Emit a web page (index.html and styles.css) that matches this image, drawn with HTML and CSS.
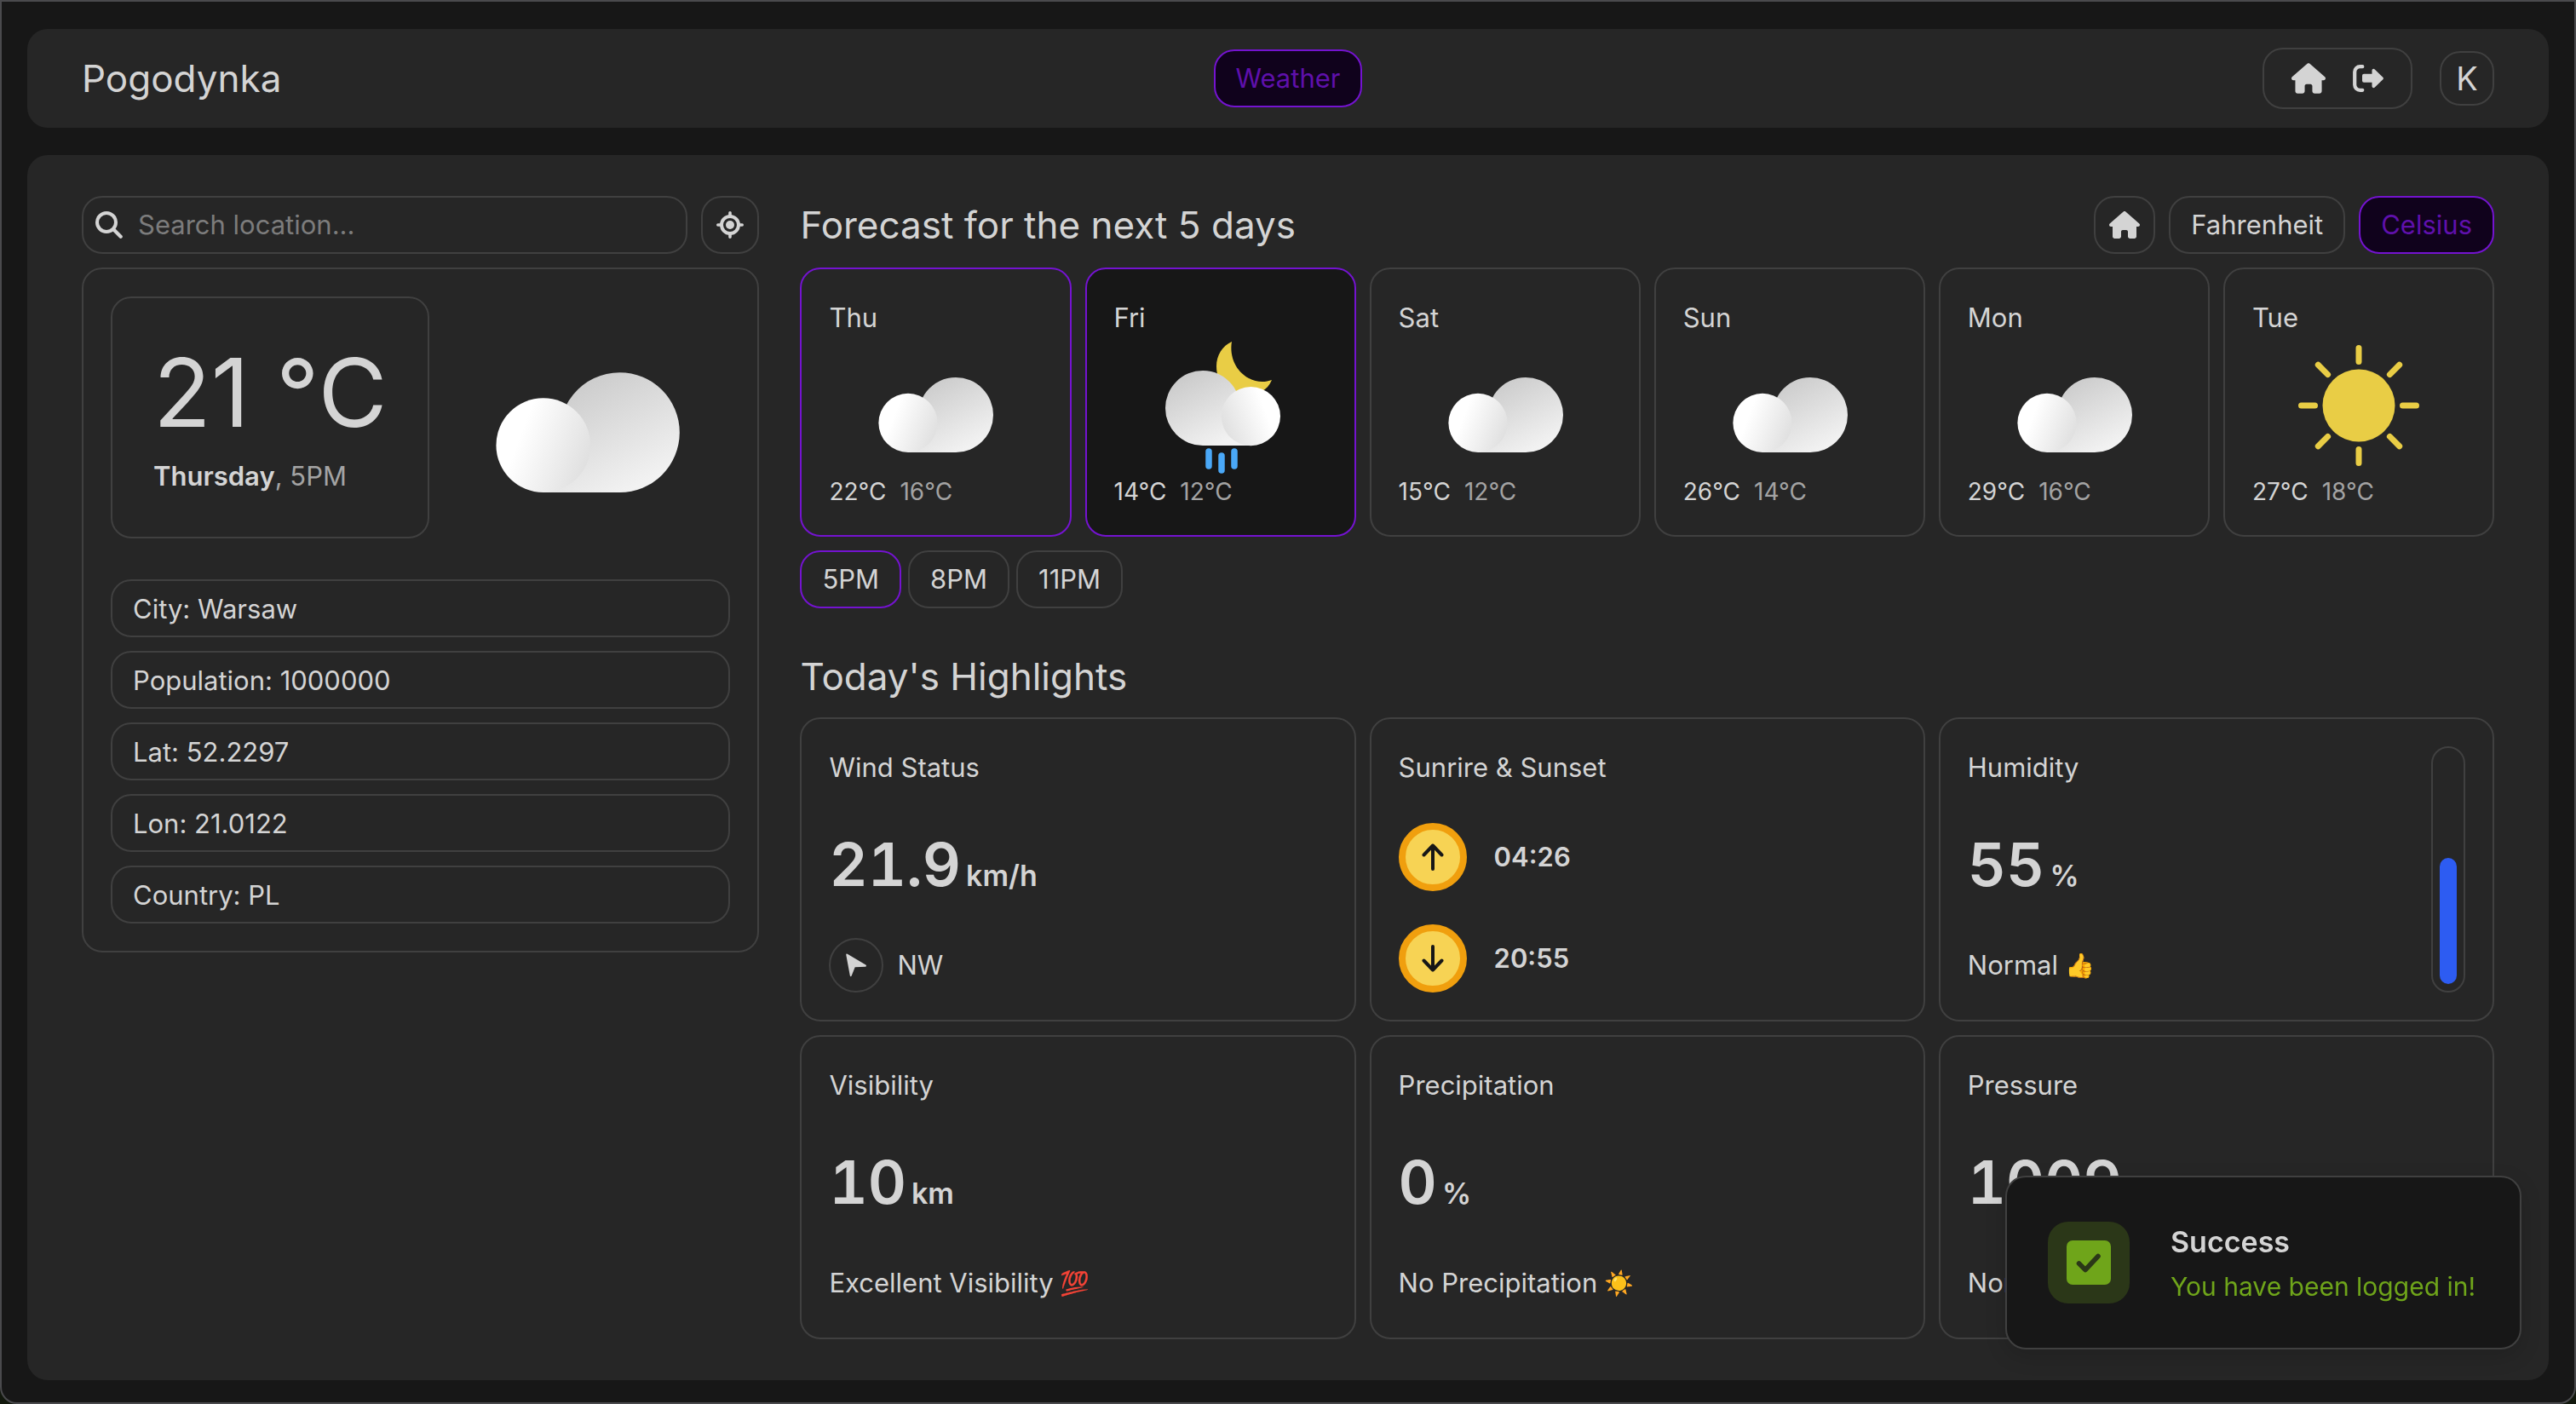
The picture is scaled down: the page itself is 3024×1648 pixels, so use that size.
FILE: index.html
```html
<!DOCTYPE html>
<html lang="en">
<head>
<meta charset="utf-8">
<meta name="viewport" content="width=device-width, initial-scale=1">
<title>Pogodynka</title>
<link rel="stylesheet" href="styles.css">
</head>
<body>
<svg class="defs" aria-hidden="true">
  <defs>
    <linearGradient id="cloud-back" x1="0" y1="0" x2="0.6" y2="1">
      <stop offset="0" stop-color="#c4c4c4"/><stop offset="1" stop-color="#f2f2f2"/>
    </linearGradient>
    <linearGradient id="cloud-front" x1="0.2" y1="0.3" x2="1" y2="0.6">
      <stop offset="0.1" stop-color="#ffffff"/><stop offset="1" stop-color="#e0e0e0"/>
    </linearGradient>
    <linearGradient id="cloud-front-flip" x1="0.8" y1="0.3" x2="0" y2="0.6">
      <stop offset="0.1" stop-color="#ffffff"/><stop offset="1" stop-color="#e0e0e0"/>
    </linearGradient>
  </defs>
  <symbol id="cloud" viewBox="0 0 160 160">
    <path fill="url(#cloud-back)" d="M104 47a44 44 0 0 1 0 88H48V100H61A44 44 0 0 1 104 47Z"/>
    <circle cx="48" cy="100.400" r="34.600" fill="url(#cloud-front)"/>
  </symbol>
  <symbol id="night-rain" viewBox="0 0 160 160">
    <path fill="#e9cd45" d="M93 5C82 10 75 21 75 34C75 56 92 68 108 68C124 68 135 62 140 50C132 53 122 53 113 48C98 40 90 23 93 5Z"/>
    <path fill="url(#cloud-back)" d="M59 39a44 44 0 0 0 0 88H115V92H102A44 44 0 0 0 59 39Z"/>
    <circle cx="115.400" cy="92.600" r="34.600" fill="url(#cloud-front-flip)"/>
    <path stroke="#4aa8f7" stroke-width="7.500" stroke-linecap="round" d="M66 134v17M81 139v17M96 134v17"/>
  </symbol>
  <symbol id="sun" viewBox="0 0 160 160">
    <circle cx="80" cy="80" r="42.500" fill="#e9cd45"/>
    <path stroke="#e9cd45" stroke-width="7" stroke-linecap="round" d="M80 28.500v-16M80 131.500v16M28.500 80h-16M131.500 80h16M43.600 43.600l-11.300-11.300M116.400 43.600l11.300-11.300M43.600 116.400l-11.300 11.300M116.400 116.400l11.300 11.300"/>
  </symbol>
  <symbol id="house" viewBox="0 0 576 512">
    <path fill="currentColor" d="M575.8 255.5c0 18-15 32.1-32 32.1h-32l.7 160.2c0 2.700-.2 5.400-.5 8.100V472c0 22.100-17.900 40-40 40H392c-22.100 0-40-17.900-40-40V384c0-17.700-14.300-32-32-32H256c-17.700 0-32 14.300-32 32v88c0 22.100-17.900 40-40 40H104c-22.100 0-40-17.900-40-40V287.600H32c-18 0-32-14-32-32.100c0-9 3-17 10-24L266.400 8c7-7 15-8 22-8s15 2 21 7L564.800 231.500c8 7 12 15 11 24z"/>
  </symbol>
</svg>

<div class="page">
  <header class="topbar">
    <h1 class="brand">Pogodynka</h1>
    <nav><a class="pill pill-on" href="#weather">Weather</a></nav>
    <div class="account">
      <div class="quick">
        <a href="#home" aria-label="Home"><svg class="icon-house-lg"><use href="#house"/></svg></a>
        <a href="#logout" aria-label="Log out"><svg class="icon-out" viewBox="0 0 36 32" fill="none"><path d="M11.300 2.200H8.500A6.300 6.300 0 0 0 2.200 8.500V23.500A6.300 6.300 0 0 0 8.500 29.800H11.300" stroke="currentColor" stroke-width="4.200" stroke-linecap="round"/><path d="M13 10.700h9.500V7c0-2.200 2-2.800 3.300-1.500l9.300 9a2 2 0 0 1 0 3l-9.300 9c-1.300 1.300-3.300.7-3.300-1.500v-4.200H13a2 2 0 0 1-2-2v-6.100a2 2 0 0 1 2-2Z" fill="currentColor"/></svg></a>
      </div>
      <button class="avatar" type="button">K</button>
    </div>
  </header>

  <main class="board">
    <section class="side">
      <form class="search-row">
        <label class="search">
          <svg class="icon-search" viewBox="0 0 32 32" fill="none" stroke="currentColor" stroke-linecap="round"><circle cx="13" cy="13" r="11" stroke-width="4"/><path d="M21.500 21.500L29.700 29.700" stroke-width="4.200"/></svg>
          <input type="text" placeholder="Search location..." aria-label="Search location">
        </label>
        <button class="locate" type="button" aria-label="Use my location"><svg class="icon-locate" viewBox="0 0 32 32" fill="none" stroke="currentColor"><circle cx="16" cy="16" r="10" stroke-width="4"/><circle cx="16" cy="16" r="5" fill="currentColor" stroke="none"/><path d="M16 1.800v4M16 26.200v4M1.800 16h4M26.200 16h4" stroke-width="3.600" stroke-linecap="round"/></svg></button>
      </form>
      <div class="card now">
        <div class="now-top">
          <div class="card now-temp">
            <p class="now-value">21 °C</p>
            <p class="now-when"><b>Thursday</b>, 5PM</p>
          </div>
          <div class="now-icon"><svg role="img" aria-label="Cloudy"><use href="#cloud"/></svg></div>
        </div>
        <ul class="facts">
          <li>City: Warsaw</li>
          <li>Population: 1000000</li>
          <li>Lat: 52.2297</li>
          <li>Lon: 21.0122</li>
          <li>Country: PL</li>
        </ul>
      </div>
    </section>

    <section class="content">
      <div class="forecast-head">
        <h2>Forecast for the next 5 days</h2>
        <div class="units">
          <button class="pill pill-icon" type="button" aria-label="Home location"><svg class="icon-house"><use href="#house"/></svg></button>
          <button class="pill" type="button">Fahrenheit</button>
          <button class="pill pill-on" type="button">Celsius</button>
        </div>
      </div>
      <div class="days">
        <button class="card day day-active" type="button"><span>Thu</span><svg><use href="#cloud"/></svg><span class="range">22°C <i>16°C</i></span></button>
        <button class="card day day-active day-hover" type="button"><span>Fri</span><svg><use href="#night-rain"/></svg><span class="range">14°C <i>12°C</i></span></button>
        <button class="card day" type="button"><span>Sat</span><svg><use href="#cloud"/></svg><span class="range">15°C <i>12°C</i></span></button>
        <button class="card day" type="button"><span>Sun</span><svg><use href="#cloud"/></svg><span class="range">26°C <i>14°C</i></span></button>
        <button class="card day" type="button"><span>Mon</span><svg><use href="#cloud"/></svg><span class="range">29°C <i>16°C</i></span></button>
        <button class="card day" type="button"><span>Tue</span><svg><use href="#sun"/></svg><span class="range">27°C <i>18°C</i></span></button>
      </div>
      <div class="hours">
        <button class="pill pill-active" type="button">5PM</button>
        <button class="pill" type="button">8PM</button>
        <button class="pill" type="button">11PM</button>
      </div>
      <h2 class="highlights-title">Today's Highlights</h2>
      <div class="highlights">
        <article class="card stat">
          <h3>Wind Status</h3>
          <p class="value">21.9 <small>km/h</small></p>
          <p class="note"><span class="compass"><svg viewBox="0 0 24 28" fill="currentColor"><path d="M1.800.800Q0 0 .300 1.900L4.800 26.200q.9 2 1.900 0L10.700 16.200l12.400-.4q1.600-1 .2-2.200Z"/></svg></span>NW</p>
        </article>
        <article class="card stat">
          <h3>Sunrire &amp; Sunset</h3>
          <p class="sun-time"><span class="coin"><svg viewBox="0 0 32 32"><path d="M16 30V2.500M5.500 13.500L16 2.500L26.500 13.500"/></svg></span>04:26</p>
          <p class="sun-time"><span class="coin"><svg viewBox="0 0 32 32"><path d="M16 2V29.500M5.500 18.500L16 29.500L26.500 18.500"/></svg></span>20:55</p>
        </article>
        <article class="card stat stat-split">
          <div class="stat-body">
            <h3>Humidity</h3>
            <p class="value">55 <small>%</small></p>
            <p class="note">Normal <span class="emoji">👍</span></p>
          </div>
          <div class="meter"><div class="meter-fill" style="height:55%"></div></div>
        </article>
        <article class="card stat">
          <h3>Visibility</h3>
          <p class="value">10 <small>km</small></p>
          <p class="note">Excellent Visibility <span class="emoji">💯</span></p>
        </article>
        <article class="card stat">
          <h3>Precipitation</h3>
          <p class="value">0 <small>%</small></p>
          <p class="note">No Precipitation <span class="emoji">☀️</span></p>
        </article>
        <article class="card stat">
          <h3>Pressure</h3>
          <p class="value">1009 <small>hPa</small></p>
          <p class="note">Normal <span class="emoji">👍</span></p>
        </article>
      </div>
    </section>
  </main>
</div>

<div class="toast" role="status">
  <span class="toast-icon"><svg viewBox="0 0 52 52"><rect width="52" height="52" rx="7" fill="#6fa51a"/><path d="M14.500 27l7.500 7.500L37 18.500" fill="none" stroke="#2b3718" stroke-width="5.600" stroke-linecap="round" stroke-linejoin="round"/></svg></span>
  <div>
    <p class="toast-title">Success</p>
    <p class="toast-text">You have been logged in!</p>
  </div>
</div>
</body>
</html>
```
FILE: styles.css
```css
:root {
  --ink: #d4d4d4;
  --muted: #a3a3a3;
  --line: #404040;
  --panel: #262626;
  --deep: #171717;
  --accent: #7413d0;
}

* { box-sizing: border-box; margin: 0; padding: 0; }

body {
  background: #12180d;
  color: var(--ink);
  font-family: Inter, "Liberation Sans", "Noto Color Emoji", sans-serif;
  font-size: 31px;
  line-height: 50px;
}

button, input { font: inherit; color: inherit; background: none; }
a { color: inherit; text-decoration: none; }
ul { list-style: none; }
h1, h2 { font-size: 44px; font-weight: 400; line-height: 64px; }
h3 { font-size: inherit; font-weight: 400; }
svg { display: block; }
.defs { position: absolute; width: 0; height: 0; }

.page {
  min-height: 100vh;
  display: flex;
  flex-direction: column;
  gap: 32px;
  padding: 32px 30px 26px;
  border: 2px solid #4a4a4d;
  border-radius: 0 0 20px 20px;
  background: var(--deep);
}

.topbar {
  display: grid;
  grid-template-columns: 1fr auto 1fr;
  align-items: center;
  padding: 22px 64px;
  border-radius: 24px;
  background: var(--panel);
}
.account { display: flex; align-items: center; justify-content: flex-end; gap: 32px; }
.quick {
  display: flex;
  align-items: center;
  gap: 32px;
  height: 72px;
  padding: 0 32px;
  border: 2px solid var(--line);
  border-radius: 24px;
}
.icon-house-lg { width: 40px; height: 36px; }
.icon-out { width: 36px; height: 32px; }
.avatar {
  width: 64px;
  height: 64px;
  border: 2px solid var(--line);
  border-radius: 24px;
  font-size: 38px;
}

.pill {
  display: inline-flex;
  align-items: center;
  justify-content: center;
  height: 68px;
  padding: 0 24px;
  border: 2px solid var(--line);
  border-radius: 24px;
}
.pill-icon { padding: 0 16px; }
.pill-active { border-color: var(--accent); }
.pill-on { border-color: var(--accent); background: #10021c; color: #5f10ab; }

.board {
  flex: 1;
  display: grid;
  grid-template-columns: 2fr 5fr;
  gap: 48px;
  padding: 48px 64px;
  border-radius: 24px;
  background: var(--panel);
}
.card { border: 2px solid var(--line); border-radius: 24px; }

.side { display: flex; flex-direction: column; gap: 16px; align-self: start; }
.search-row { display: flex; gap: 16px; }
.search {
  flex: 1;
  display: flex;
  align-items: center;
  gap: 18px;
  height: 68px;
  padding: 0 14px;
  border: 2px solid var(--line);
  border-radius: 24px;
}
.icon-search { width: 32px; height: 32px; }
.search input { flex: 1; min-width: 0; border: 0; outline: 0; }
.search input::placeholder { color: #7c7c7c; opacity: 1; }
.locate {
  display: grid;
  place-items: center;
  width: 68px;
  height: 68px;
  border: 2px solid var(--line);
  border-radius: 24px;
}
.icon-locate { width: 32px; height: 32px; }

.now { display: flex; flex-direction: column; gap: 48px; padding: 32px; }
.now-top { display: flex; gap: 16px; }
.now-temp { display: flex; flex-direction: column; gap: 12px; padding: 50px 48px 46px; white-space: nowrap; }
.now-value { font-size: 111px; line-height: 122px; }
.now-when { color: var(--muted); }
.now-when b { color: var(--ink); font-weight: 600; }
.now-icon { flex: 1; display: grid; place-items: center; }
.now-icon svg { width: 256px; height: 256px; }

.facts { display: grid; gap: 16px; }
.facts li { padding: 8px 24px 6px; border: 2px solid var(--line); border-radius: 24px; }

.content { display: flex; flex-direction: column; min-width: 0; }
.forecast-head { display: flex; align-items: center; justify-content: space-between; height: 68px; }
.units { display: flex; gap: 16px; }
.icon-house { width: 36px; height: 32px; }

.days { display: grid; grid-template-columns: repeat(6, 1fr); gap: 16px; margin-top: 16px; }
.day { display: flex; flex-direction: column; padding: 32px 32px 30px; text-align: left; }
.day svg { width: 160px; height: 160px; margin-top: -2px; align-self: center; }
.day-active { border-color: var(--accent); }
.day-hover { background: var(--deep); }
.range { display: flex; gap: 16px; font-size: 28px; line-height: 42px; }
.range i { font-style: normal; color: var(--muted); }

.hours { display: flex; gap: 8px; margin-top: 16px; }

.highlights-title { margin: 48px 0 16px; }
.highlights {
  flex: 1;
  display: grid;
  grid-template-columns: repeat(3, 1fr);
  grid-auto-rows: 1fr;
  gap: 16px;
}
.stat { display: flex; flex-direction: column; justify-content: space-between; padding: 32px; }
.stat-split { flex-direction: row; }
.stat-body { display: flex; flex-direction: column; justify-content: space-between; }
.value {
  display: flex;
  align-items: baseline;
  gap: 6px;
  margin-top: 16px;
  font-size: 70px;
  font-weight: 600;
  line-height: 72px;
  font-variant-numeric: tabular-nums;
}
.value small { font-size: 34px; }
.note { display: flex; align-items: center; gap: 8px; height: 64px; }
.emoji { font-size: 28px; }
.compass {
  display: grid;
  place-items: center;
  width: 64px;
  height: 64px;
  margin-right: 8px;
  border: 2px solid var(--line);
  border-radius: 50%;
}
.compass svg { width: 24px; height: 28px; }
.sun-time { display: flex; align-items: center; gap: 32px; font-weight: 600; }
.coin {
  display: grid;
  place-items: center;
  width: 80px;
  height: 80px;
  border: 8px solid #f09f0e;
  border-radius: 50%;
  background: #f7d354;
}
.coin svg { width: 32px; height: 32px; fill: none; stroke: var(--deep); stroke-width: 4; stroke-linecap: round; stroke-linejoin: round; }
.meter {
  display: flex;
  align-items: flex-end;
  width: 40px;
  padding: 8px;
  border: 2px solid var(--line);
  border-radius: 20px;
}
.meter-fill { width: 100%; border-radius: 10px; background: #2d5cf2; }

.toast {
  position: fixed;
  right: 64px;
  bottom: 64px;
  display: flex;
  align-items: center;
  gap: 48px;
  min-width: 606px;
  padding: 48px;
  border: 2px solid var(--line);
  border-radius: 24px;
  background: var(--deep);
  box-shadow: 0 8px 24px rgba(0, 0, 0, .15);
}
.toast-icon {
  display: grid;
  place-items: center;
  width: 96px;
  height: 96px;
  border-radius: 24px;
  background: #2b3718;
}
.toast-icon svg { width: 52px; height: 52px; }
.toast-title { font-size: 34px; font-weight: 600; line-height: 56px; }
.toast-text { font-size: 30px; line-height: 48px; color: #6fa51a; }
```
